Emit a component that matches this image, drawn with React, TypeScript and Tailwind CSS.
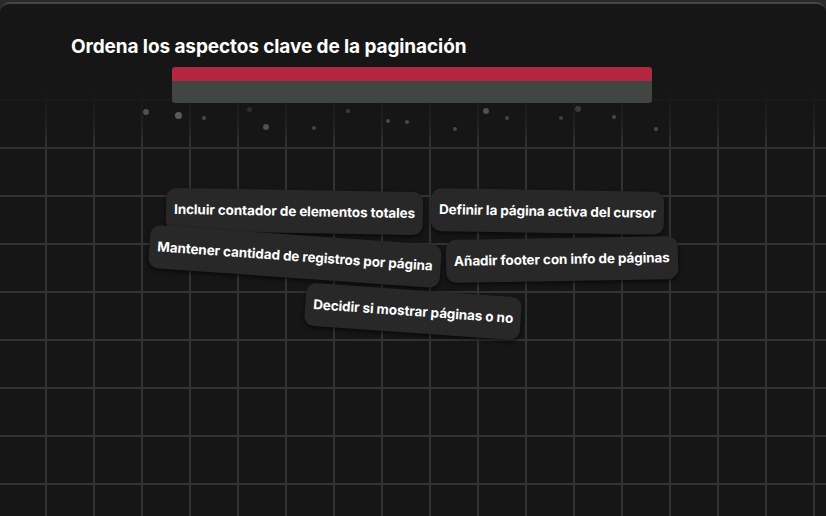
import React from 'react';

interface Chip {
  text: string;
  left: number;
  top: number;
  rotate: string;
}

const chips: Chip[] = [
  { text: 'Incluir contador de elementos totales', left: 166, top: 190, rotate: 'rotate-[1deg]' },
  { text: 'Definir la página activa del cursor', left: 431, top: 190, rotate: 'rotate-[1deg]' },
  { text: 'Mantener cantidad de registros por página', left: 149, top: 235, rotate: 'rotate-[4deg]' },
  { text: 'Añadir footer con info de páginas', left: 446, top: 238, rotate: 'rotate-[-1deg]' },
  { text: 'Decidir si mostrar páginas o no', left: 305, top: 290, rotate: 'rotate-[4deg]' },
];

const dots = [
  [146, 112, 6, 0.5], [178, 115, 7, 0.6], [204, 118, 4, 0.45], [249, 109, 5, 0.2],
  [266, 127, 6, 0.5], [314, 128, 4, 0.4], [348, 111, 4, 0.35], [388, 121, 4, 0.45],
  [407, 122, 4, 0.45], [455, 129, 4, 0.45], [486, 111, 6, 0.5], [507, 118, 4, 0.4],
  [561, 118, 4, 0.35], [578, 109, 6, 0.3], [614, 117, 4, 0.45], [656, 129, 4, 0.45],
];

export default function App() {
  return (
    <div className="h-[516px] w-[826px] overflow-hidden bg-[#2a2a2a] pt-[2px] font-['Inter','Noto_Sans',sans-serif]">
      <div className="relative h-[600px] rounded-t-[10px] border-t-2 border-[#474747] bg-[#161616]">
        {/* grid */}
        <div className="absolute inset-0 bg-[linear-gradient(to_right,#333333_2px,transparent_2px),linear-gradient(to_bottom,#333333_2px,transparent_2px)] bg-[size:48px_48px] bg-[position:45px_-1px] [mask-image:linear-gradient(to_bottom,transparent_80px,rgba(0,0,0,0.25)_110px,black_146px)]" />

        {/* particles */}
        {dots.map(([x, y, s, o], i) => (
          <span
            key={i}
            className="absolute rounded-full bg-[#8a8a8a]"
            style={{ left: x - s / 2, top: y - 4 - s / 2, width: s, height: s, opacity: o }}
          />
        ))}

        <div className="relative flex flex-col pl-[71px] pt-[32px]">
          <h1 className="text-[19px] font-bold leading-[22px] tracking-[-0.1px] text-white">
            Ordena los aspectos clave de la paginación
          </h1>
          <div className="ml-[101px] mt-[9px] flex h-[36px] w-[480px] flex-col overflow-hidden rounded-[3px]">
            <div className="h-[14px] bg-[#b32640]" />
            <div className="flex-1 bg-[#424642]" />
          </div>
        </div>

        {chips.map((c) => (
          <div
            key={c.text}
            className={`absolute ${c.rotate} rounded-[10px] bg-[#282828] px-[8px] py-[12px] text-[13.5px] font-bold leading-[19px] tracking-[-0.1px] whitespace-nowrap text-white shadow-[0_2px_4px_rgba(0,0,0,0.6)]`}
            style={{ left: c.left, top: c.top - 4 }}
          >
            {c.text}
          </div>
        ))}
      </div>
    </div>
  );
}
